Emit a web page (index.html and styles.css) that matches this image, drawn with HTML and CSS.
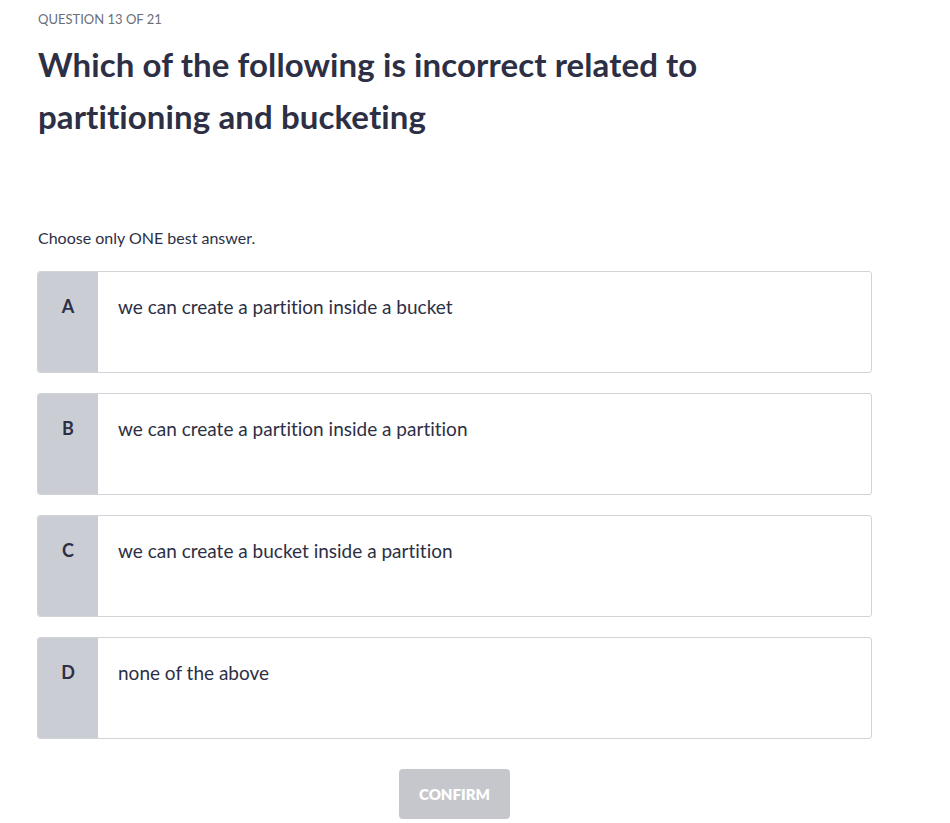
FILE: index.html
```html
<!DOCTYPE html>
<html>
<head>
<meta charset="utf-8">
<link rel="stylesheet" href="styles.css">
</head>
<body>
<main class="quiz">
  <div class="counter">QUESTION 13 OF 21</div>
  <h1 class="question">Which of the following is incorrect related to partitioning and bucketing</h1>
  <p class="hint">Choose only ONE best answer.</p>
  <ul class="options">
    <li class="option"><span class="letter">A</span><span class="text">we can create a partition inside a bucket</span></li>
    <li class="option"><span class="letter">B</span><span class="text">we can create a partition inside a partition</span></li>
    <li class="option"><span class="letter">C</span><span class="text">we can create a bucket inside a partition</span></li>
    <li class="option"><span class="letter">D</span><span class="text">none of the above</span></li>
  </ul>
  <div class="actions">
    <button class="confirm" disabled>CONFIRM</button>
  </div>
</main>
</body>
</html>
```
FILE: styles.css
```css
* { box-sizing: border-box; }
html, body { margin: 0; padding: 0; background: #fff; }
body {
  font-family: "Lato", "Liberation Sans", sans-serif;
  font-variant-ligatures: none;
  color: #2d2f45;
}
.quiz {
  width: 835px;
  margin-left: 37px;
  padding-top: 10px;
}
.counter {
  font-size: 13px;
  line-height: 18px;
  color: #6a6f7a;
  padding-left: 1px;
}
.question {
  margin: 10px 0 0 1px;
  font-size: 33px;
  line-height: 52px;
  font-weight: 700;
  letter-spacing: 0.1px;
  color: #2d2f45;
  width: 720px;
}
.hint {
  margin: 84px 0 0 1px;
  font-size: 16px;
  line-height: 24px;
  color: #2d2f45;
}
.options {
  list-style: none;
  margin: 21px 0 0 0;
  padding: 0;
  display: flex;
  flex-direction: column;
  gap: 20px;
}
.option {
  display: flex;
  height: 102px;
  border: 1px solid #d1d3d8;
  border-radius: 3px;
  overflow: hidden;
}
.letter {
  width: 60px;
  flex: none;
  background: #cbcdd4;
  font-weight: 700;
  font-size: 18px;
  line-height: 27px;
  text-align: center;
  padding-top: 21px;
  color: #2d2f45;
}
.text {
  padding: 21px 20px 0 20px;
  font-size: 19px;
  line-height: 27px;
  color: #2d2f45;
}
.actions {
  display: flex;
  justify-content: center;
  margin-top: 30px;
}
.confirm {
  width: 111px;
  height: 50px;
  border: none;
  border-radius: 4px;
  background: #c5c7cc;
  color: #fff;
  font-family: inherit;
  font-size: 15px;
  font-weight: 800;
}
```
